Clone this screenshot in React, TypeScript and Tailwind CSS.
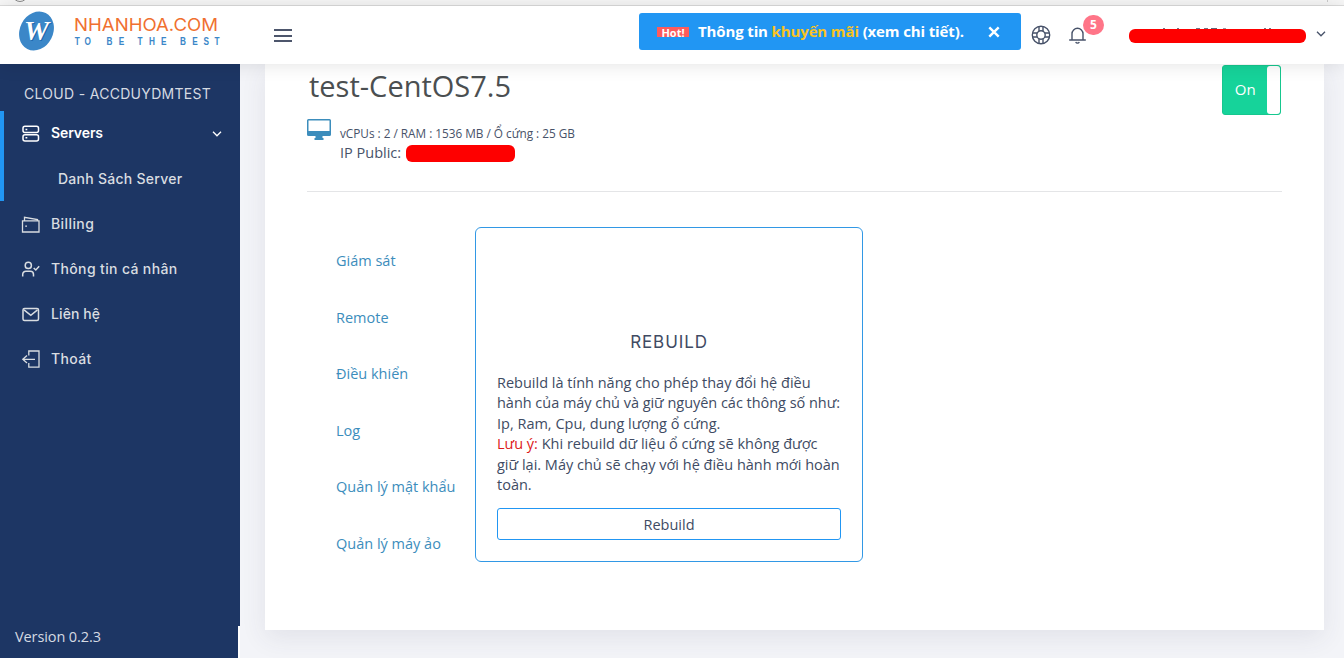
import type { ReactNode } from "react";

const sans = "font-['Open_Sans','Noto_Sans',sans-serif]";
const display = "font-['Inter','Noto_Sans',sans-serif]";

function Icon({ children, size = 20 }: { children: ReactNode; size?: number }) {
  return (
    <svg width={size} height={size} viewBox="0 0 20 20" fill="none" stroke="currentColor" strokeWidth="1.5" className="shrink-0">
      {children}
    </svg>
  );
}

function Chevron() {
  return (
    <svg width="10" height="8" viewBox="0 0 10 8" fill="none" stroke="currentColor" strokeWidth="1.3" className="shrink-0">
      <path d="M1 1.8 5 5.8 9 1.8" />
    </svg>
  );
}

function Logo() {
  return (
    <div className="flex w-[264px] shrink-0 items-start pl-[18px]">
      <svg width="37" height="42" viewBox="0 0 37 42" className="mt-[4px] shrink-0">
        <ellipse cx="18.5" cy="21" rx="16.6" ry="20.3" transform="rotate(27 18.5 21)" fill="#3b87c8" />
        <text x="19.5" y="31" textAnchor="middle" fontFamily="Liberation Serif" fontStyle="italic" fontWeight="bold" fontSize="28" textLength="25" lengthAdjust="spacingAndGlyphs" fill="#1d68ad">W</text>
        <text x="18.5" y="30" textAnchor="middle" fontFamily="Liberation Serif" fontStyle="italic" fontWeight="bold" fontSize="28" textLength="25" lengthAdjust="spacingAndGlyphs" fill="white">W</text>
      </svg>
      <svg width="150" height="40" viewBox="0 0 150 40" className="ml-[17px] mt-[6px]">
        <text x="2" y="19.3" fontFamily="Inter" fontSize="17.6" fontWeight="400" textLength="144" lengthAdjust="spacingAndGlyphs" fill="#f07030">NHANHOA.COM</text>
        <g fontFamily="Liberation Sans" fontSize="10.3" fontWeight="bold" fill="#3b87c8" transform="translate(0 32.5) scale(0.8 1)">
          <text x="3.4 15.6" y="0">TO</text>
          <text x="43.1 58.4" y="0">BE</text>
          <text x="82 96.3 111.3" y="0">THE</text>
          <text x="135 150.3 164.4 178" y="0">BEST</text>
        </g>
      </svg>
    </div>
  );
}

function Header() {
  return (
    <header className="relative z-20 flex h-[58px] shrink-0 bg-white shadow-[0_0_18px_rgba(0,0,0,0.12)]">
      <Logo />
      <button className="ml-[10px] mt-[23px] flex h-[13px] w-[18px] shrink-0 flex-col justify-between">
        <span className="h-[2px] w-full bg-[#4d566c]" />
        <span className="h-[2px] w-full bg-[#4d566c]" />
        <span className="h-[2px] w-full bg-[#4d566c]" />
      </button>
      <div className={`${sans} ml-[347px] mt-[7px] flex h-[37px] w-[382px] shrink-0 items-center rounded-[3px] bg-[#2196f3] pl-[18px] text-white`}>
        <span className="mt-px flex h-[10px] w-[32px] items-center justify-center bg-[#ff5b5c] text-[11px] font-bold leading-none">Hot!</span>
        <span className="ml-[9px] w-[266px] whitespace-nowrap text-[15px] font-bold tracking-[-0.13px]">
          Thông tin <span className="text-[#f9c321]">khuyến mãi</span> (xem chi tiết).
        </span>
        <svg width="12" height="12" viewBox="0 0 12 12" stroke="white" strokeWidth="2.4" className="ml-[24px]">
          <path d="M1.3 1.3 10.7 10.7M10.7 1.3 1.3 10.7" />
        </svg>
      </div>
      <div className="ml-[10px] mt-[19px] text-[#475269]">
        <Icon>
          <g strokeWidth="1.4">
            <circle cx="10" cy="10" r="8.7" />
            <circle cx="10" cy="10" r="4.2" />
            <path d="M8 1.5V6.2M12 1.5V6.2M8 13.8V18.5M12 13.8V18.5M1.5 8H6.2M1.5 12H6.2M13.8 8H18.5M13.8 12H18.5" />
          </g>
        </Icon>
      </div>
      <div className="relative ml-[16px] mt-[19px] h-[20px] w-[20px] text-[#475269]">
        <Icon>
          <path d="M2.2 15H18.8M5 14.5V8.8a5.5 5.5 0 0 1 11 0V14.5M8.7 17a2 2 0 0 0 3.6 0" strokeWidth="1.4" />
        </Icon>
        <span className={`${sans} absolute -top-[10px] left-[16px] flex h-[20px] w-[21px] items-center justify-center rounded-full bg-[#ff7588] text-[12px] font-bold text-white`}>5</span>
      </div>
      <div className="relative ml-[42px] mt-[23px] h-[14px] w-[177px] rounded-[6px] bg-[#fe0000]">
        <span className="absolute -top-px left-[34px] flex h-px items-end text-[#4d566c]">
          <i className="h-px w-[2px] bg-[#707789]" />
          <i className="ml-[12px] h-px w-[2px] bg-[#707789]" />
          <i className="ml-[17px] h-px w-[4px] bg-[#707789]" />
          <i className="ml-[4px] h-px w-[4px] bg-[#707789]" />
          <i className="ml-[3px] h-px w-[6px] bg-[#606779]" />
          <i className="ml-[6px] h-px w-[3px] bg-[#9297a5]" />
          <i className="ml-[38px] h-px w-[2px] bg-[#707789]" />
          <i className="ml-[3px] h-px w-[2px] bg-[#707789]" />
        </span>
      </div>
      <div className="ml-[10px] mt-[24px] text-[#475269]"><Chevron /></div>
    </header>
  );
}

function NavItem({ icon, label, spacing }: { icon: ReactNode; label: string; spacing: string }) {
  return (
    <a className="flex h-[45px] items-center pl-[21px] text-[#d9dde1]">
      <Icon>{icon}</Icon>
      <span className={`ml-[10px] whitespace-nowrap text-[14px] font-medium ${spacing}`}>{label}</span>
    </a>
  );
}

function Sidebar() {
  return (
    <aside className={`${display} flex w-[240px] shrink-0 flex-col`}>
      <div className="flex h-[562px] shrink-0 flex-col bg-[#1d3664]">
        <div className="h-[47px] pl-[24px] pt-[20px] text-[14px] leading-[20px] tracking-[0.3px] text-[#d5dae2]">CLOUD - ACCDUYDMTEST</div>
        <div className="h-[90px] border-l-4 border-[#2196f3]">
          <a className="flex h-[45px] items-center pl-[17px] pr-[18px] text-white">
            <Icon>
              <rect x="2" y="2.2" width="15.5" height="6.3" rx="2" />
              <rect x="2" y="10.7" width="15.5" height="6.3" rx="2" />
              <path d="M4.5 5.4H6.3M4.5 13.8H6.3" />
            </Icon>
            <span className="-mt-[2px] ml-[10px] grow text-[14px] font-semibold tracking-[-0.1px]">Servers</span>
            <Chevron />
          </a>
          <a className="flex h-[45px] items-center pl-[54px] text-[14px] font-medium tracking-[0.27px] text-[#d9dde1]">Danh Sách Server</a>
        </div>
        <NavItem label="Billing" spacing="tracking-[0.4px]" icon={<path d="M1.5 6.8H18V18H1.5ZM3.5 6.5V3.3L16.5 5.6V6.8M4.2 12.2H6" strokeWidth="1.3" />} />
        <NavItem label="Thông tin cá nhân" spacing="tracking-[0.36px]" icon={<><circle cx="7.3" cy="6.4" r="3.1" /><path d="M1.7 17.5V15.4a3.2 3.2 0 0 1 3.2-3.2H9.3a3.2 3.2 0 0 1 3.2 3.2V17.5M12.7 9 14.8 11 18.2 7.3" /></>} />
        <NavItem label="Liên hệ" spacing="tracking-[0.1px]" icon={<><rect x="2" y="4.5" width="15.5" height="12" rx="1.5" /><path d="M3 5.8 9.8 11.3 16.5 5.8" /></>} />
        <NavItem label="Thoát" spacing="tracking-[0.35px]" icon={<path d="M7.8 6.5V2H18V18.2H7.8V14M14 10.3H2M6 6.5 1.8 10.3 6 14.1" strokeWidth="1.3" />} />
      </div>
      <div className={`${sans} flex grow items-center border-r-2 border-white bg-[#1d3664] pb-[12px] pl-[15px] text-[14.5px] tracking-[-0.1px] text-[#d5dae2]`}>Version 0.2.3</div>
    </aside>
  );
}

const tabs = ["Giám sát", "Remote", "Điều khiển", "Log", "Quản lý mật khẩu", "Quản lý máy ảo"];

function RebuildCard() {
  return (
    <section className="flex h-[335px] w-[388px] flex-col rounded-[6px] border border-[#3298e5] px-[21px] text-[#404b63]">
      <h2 className={`${display} mt-[103px] text-center text-[17px] leading-[22px] tracking-[0.9px]`}>REBUILD</h2>
      <p className="mt-[20px] whitespace-nowrap text-[14.5px] leading-[20.4px]">
        Rebuild là tính năng cho phép thay đổi hệ điều<br />
        <span className="tracking-[-0.03px]">hành của máy chủ và giữ nguyên các thông số như:</span><br />
        Ip, Ram, Cpu, dung lượng ổ cứng.<br />
        <span className="text-[#dc1919]">Lưu ý:</span> Khi rebuild dữ liệu ổ cứng sẽ không được<br />
        giữ lại. Máy chủ sẽ chạy với hệ điều hành mới hoàn<br />
        toàn.
      </p>
      <button className="mt-[13px] h-[32px] rounded-[3px] border border-[#2196f3] pt-px text-[14.5px] leading-none">Rebuild</button>
    </section>
  );
}

function ServerPanel() {
  return (
    <main className="h-[566px] w-[1059px] shrink-0 bg-white px-[42px] text-[#475269] shadow-[0_8px_24px_rgba(50,55,90,0.09)]">
      <div className="flex h-[51px] items-start justify-between pr-px">
        <h1 className="pl-[2px] pt-[3px] text-[29px] leading-[38px] text-[#4b4f51]">test-CentOS7.5</h1>
        <button className="mt-px flex h-[50px] w-[59px] rounded-[3px] border border-[#16c78e] bg-[#16d39a] text-[15px] text-white">
          <span className="flex h-full w-[46px] items-center justify-center pb-[2px]">On</span>
          <span className="h-full w-[13px] rounded-[3px] bg-white" />
        </button>
      </div>
      <div className="flex h-[77px] border-b border-[#e4e5e7]">
        <svg width="25" height="21" viewBox="0 0 25 21" className="mt-[4px] shrink-0" fill="#3c8dbc">
          <path fillRule="evenodd" d="M1.5 0H22.5Q24 0 24 1.5V15.5Q24 17 22.5 17H15.5V19H16.5V21H7.5V19H8.5V17H1.5Q0 17 0 15.5V1.5Q0 0 1.5 0ZM1.5 1.5V12H22.5V1.5Z" />
        </svg>
        <div className="ml-[8px] pt-[10px]">
          <div className="h-[17px] whitespace-nowrap text-[11.8px] leading-[17px] tracking-[-0.02px]">vCPUs : 2 / RAM : 1536 MB / Ổ cứng : 25 GB</div>
          <div className="flex items-center text-[14.5px] leading-[22px]">
            <span className="w-[66px] whitespace-nowrap">IP Public:</span>
            <span className="h-[17px] w-[109px] rounded-[6px] bg-[#fe0000]" />
          </div>
        </div>
      </div>
      <div className="flex pt-[35px]">
        <nav className="flex w-[168px] shrink-0 flex-col pl-[29px] pt-[5.6px]">
          {tabs.map((label) => (
            <a key={label} className="flex h-[56.6px] items-center whitespace-nowrap text-[14.5px] text-[#3c8dbc]">{label}</a>
          ))}
        </nav>
        <RebuildCard />
      </div>
    </main>
  );
}

export default function App() {
  return (
    <div className={`${sans} flex h-[658px] w-[1344px] flex-col overflow-hidden bg-[#f3f4f8]`}>
      <div className="flex h-[6px] shrink-0 justify-between overflow-hidden border-b border-[#dedede] bg-[#f8f8f8]">
        <span className="-mt-[15px] ml-[12px] h-[17px] w-[16px] rounded-full border border-[#888]" />
        <span className="mr-[16px] h-[2px] w-px bg-[#ccc]" />
      </div>
      <Header />
      <div className="flex grow">
        <Sidebar />
        <div className="flex w-[1104px] pl-[25px]">
          <ServerPanel />
        </div>
      </div>
    </div>
  );
}
